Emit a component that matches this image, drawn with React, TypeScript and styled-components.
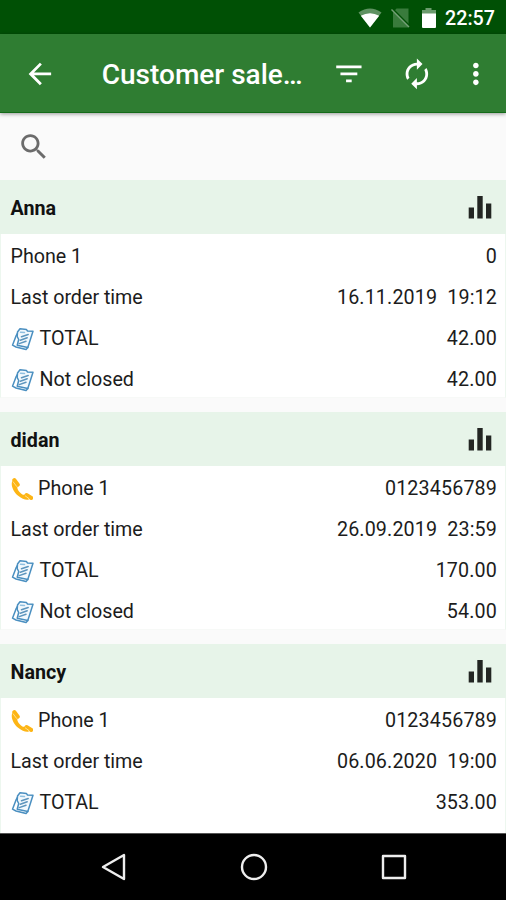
import React from 'react';
import styled, { createGlobalStyle } from 'styled-components';

const GlobalStyle = createGlobalStyle`
  * { box-sizing: border-box; }
  html, body { margin: 0; padding: 0; }
  body { font-family: Roboto, "Liberation Sans", sans-serif; background: #fafafa; overflow: hidden; }
  svg { display: block; flex: none; }
`;

const Screen = styled.div`
  width: 506px;
  height: 900px;
  display: flex;
  flex-direction: column;
  overflow: hidden;
  background: #fafafa;
`;

const StatusBar = styled.div`
  flex: none;
  height: 34px;
  padding-right: 11px;
  display: flex;
  align-items: center;
  justify-content: flex-end;
  background: #005005;
  color: #fff;
`;

const StatusIcons = styled.div`
  display: flex;
  align-items: center;
  margin-right: 7px;
  padding-top: 1px;
`;

const Clock = styled.span`
  width: 50px;
  font-size: 19.7px;
  font-weight: 500;
  line-height: 32px;
  padding-top: 4px;
  white-space: nowrap;
`;

const AppBar = styled.header`
  flex: none;
  height: 79px;
  display: flex;
  align-items: center;
  padding: 2px 13px 0 23px;
  background: #2f7d32;
  border-bottom: 1px solid #146b19;
  color: #fff;
  box-shadow: 0 1px 4px rgba(0, 0, 0, 0.4);
  z-index: 1;
`;

const Title = styled.h1`
  width: 204px;
  margin: 0 0 0 45px;
  font-size: 28px;
  font-weight: 500;
  line-height: 40px;
  padding-top: 2px;
  white-space: nowrap;
`;

const Actions = styled.div`
  display: flex;
  align-items: center;
  gap: 34px;
  margin-left: 26.3px;

  svg:last-child {
    margin-left: -8.5px;
  }
`;

const SearchBar = styled.div`
  flex: none;
  height: 67px;
  padding: 0 17px;
  display: flex;
  align-items: center;
  color: #6b6b6b;
`;

const List = styled.main`
  flex: 1;
  min-height: 0;
  overflow: hidden;
`;

const Card = styled.section`
  height: 218px;
  margin-bottom: 14px;
  background: #fff;
  border: 1px solid #edf7ef;
  border-top: 0;
  border-bottom-color: #f7f9f7;
`;

const CardHeader = styled.div`
  height: 54px;
  margin: 0 -1px;
  padding: 0 14px 0 10.5px;
  display: flex;
  align-items: center;
  justify-content: space-between;
  background: #e7f4e9;
  color: #111;
`;

const Name = styled.h2`
  margin: 0;
  padding-top: 4px;
  font-size: 19.7px;
  font-weight: 700;
  line-height: 50px;
`;

const Row = styled.div`
  height: 41px;
  padding: 4px 8px 0 9.5px;
  display: flex;
  align-items: center;
  justify-content: space-between;
  font-size: 19.7px;
  color: #1c1c1c;
  white-space: pre;
`;

const Label = styled.span`
  display: flex;
  align-items: center;
  gap: 5px;
  letter-spacing: -0.02px;
`;

const Value = styled.span`
  letter-spacing: 0.14px;
`;

const NavBar = styled.nav`
  flex: none;
  height: 67px;
  border-top: 1px solid #555;
  display: flex;
  align-items: center;
  justify-content: space-between;
  padding: 0 98px 0 99px;
  background: #000;
`;

const MaterialIcon = ({ d, size = 33.75 }: { d: string; size?: number }) => (
  <svg width={size} height={size} viewBox="0 0 24 24" fill="currentColor">
    <path d={d} />
  </svg>
);

const BACK = 'M20 11H7.83l5.59-5.59L12 4l-8 8 8 8 1.41-1.41L7.83 13H20v-2z';
const FILTER = 'M10 18h4v-2h-4v2zM3 6v2h18V6H3zm3 7h12v-2H6v2z';
const RENEW =
  'M12 6v3l4-4-4-4v3c-4.42 0-8 3.58-8 8 0 1.57.46 3.03 1.24 4.26L6.7 14.8c-.45-.83-.7-1.79-.7-2.8 0-3.31 2.69-6 6-6zm6.76 1.74L17.3 9.2c.44.84.7 1.79.7 2.8 0 3.31-2.69 6-6 6v-3l-4 4 4 4v-3c4.42 0 8-3.58 8-8 0-1.57-.46-3.03-1.24-4.26z';
const MORE =
  'M12 8c1.1 0 2-.9 2-2s-.9-2-2-2-2 .9-2 2 .9 2 2 2zm0 2c-1.1 0-2 .9-2 2s.9 2 2 2 2-.9 2-2-.9-2-2-2zm0 6c-1.1 0-2 .9-2 2s.9 2 2 2 2-.9 2-2-.9-2-2-2z';
const SEARCH =
  'M15.5 14h-.79l-.28-.27C15.41 12.59 16 11.11 16 9.5 16 5.91 13.09 3 9.5 3S3 5.91 3 9.5 5.91 16 9.5 16c1.61 0 3.09-.59 4.23-1.57l.27.28v.79l5 4.99L20.49 19l-4.99-5zm-6 0C7.01 14 5 11.99 5 9.5S7.01 5 9.5 5 14 7.01 14 9.5 11.99 14 9.5 14z';

const StatusGlyphs = () => (
  <svg width="80" height="24" viewBox="0 0 80 24">
    <path d="M0.5 6.500Q12 -1.500 23.500 6.500L12 21.500Z" fill="#5f9262" />
    <path d="M2.800 9.800Q12 4.500 21.200 9.800L12 21.500Z" fill="#fff" />
    <path d="M38.500 2.500h12v19H35V6.500Z" fill="#397b3c" />
    <path d="M34.500 3L52 20.500" stroke="#005005" strokeWidth="2" />
    <path d="M33.500 3.500L51 21" stroke="#75a077" strokeWidth="1.500" />
    <path d="M67.500 2h6v2H78v5H64V4h3.500Z" fill="#6b9b6d" />
    <path d="M64 7.500h14v13.500a1 1 0 0 1-1 1H65a1 1 0 0 1-1-1Z" fill="#fff" />
  </svg>
);

const BarsIcon = () => (
  <svg width="24" height="24" viewBox="0 0 24 24" fill="#222522">
    <path d="M0.700 12.500h5.300V23.500H0.700zM9.300 1h5.400v22.500H9.300zM18 8.500h5.300v15H18z" />
  </svg>
);

const PhoneIcon = () => (
  <svg width="22.500" height="24" viewBox="0 0 22.500 24">
    <path d="M1.500 3.500C-1 8.500 3 15.500 7.500 19C11 21.800 15 23.500 18 22.500L14 17.500C12.500 18.300 11 17.500 9 15.500C6.800 13.200 5.700 11 6.700 9.500Z" fill="#fdb515" />
    <path d="M3.300 3L6.800 7.700M15.500 18L20.300 21" stroke="#fdb515" strokeWidth="4" strokeLinecap="round" />
    <path d="M2 4.600L5.800 9.700M14 18.700L18.300 21.800" stroke="#ffe7ad" strokeWidth="0.800" />
  </svg>
);

const ReceiptIcon = () => (
  <svg width="24" height="24" viewBox="0 0 24 24" fill="none" stroke="#4a8fc0" strokeWidth="1.500" strokeLinejoin="round" strokeLinecap="round">
    <path d="M6.500 5L9 1.800L15.500 2.600L16.500 4L22 4.300L16.800 20.600L6.200 18.200L7.700 12.500L6.200 9.500Z" fill="#f3f9fd" />
    <path d="M6.300 6.500L5.200 8.600L1.500 18.200L5 20L15.100 22.400L16.800 20.600" />
    <path d="M10.500 9.800L17.200 7.500M9.300 13.200L16.200 10.700M8.200 16.600L15 14.200" stroke="#5d95bd" />
    <path d="M9.500 5.200L13.500 5.500" stroke="#8fbfe0" />
  </svg>
);

type IconKind = 'phone' | 'receipt';
type Line = { icon?: IconKind; label: string; value: string };

const customers: { name: string; lines: Line[] }[] = [
  {
    name: 'Anna',
    lines: [
      { label: 'Phone 1', value: '0' },
      { label: 'Last order time', value: '16.11.2019  19:12' },
      { icon: 'receipt', label: 'TOTAL', value: '42.00' },
      { icon: 'receipt', label: 'Not closed', value: '42.00' },
    ],
  },
  {
    name: 'didan',
    lines: [
      { icon: 'phone', label: 'Phone 1', value: '0123456789' },
      { label: 'Last order time', value: '26.09.2019  23:59' },
      { icon: 'receipt', label: 'TOTAL', value: '170.00' },
      { icon: 'receipt', label: 'Not closed', value: '54.00' },
    ],
  },
  {
    name: 'Nancy',
    lines: [
      { icon: 'phone', label: 'Phone 1', value: '0123456789' },
      { label: 'Last order time', value: '06.06.2020  19:00' },
      { icon: 'receipt', label: 'TOTAL', value: '353.00' },
    ],
  },
];

export default function App() {
  return (
    <>
      <GlobalStyle />
      <Screen>
        <StatusBar>
          <StatusIcons>
            <StatusGlyphs />
          </StatusIcons>
          <Clock>22:57</Clock>
        </StatusBar>
        <AppBar>
          <MaterialIcon d={BACK} />
          <Title>Customer sale…</Title>
          <Actions>
            <MaterialIcon d={FILTER} />
            <MaterialIcon d={RENEW} />
            <MaterialIcon d={MORE} />
          </Actions>
        </AppBar>
        <SearchBar>
          <MaterialIcon d={SEARCH} />
        </SearchBar>
        <List>
          {customers.map((c) => (
            <Card key={c.name}>
              <CardHeader>
                <Name>{c.name}</Name>
                <BarsIcon />
              </CardHeader>
              {c.lines.map((line) => (
                <Row key={line.label}>
                  <Label>
                    {line.icon === 'phone' && <PhoneIcon />}
                    {line.icon === 'receipt' && <ReceiptIcon />}
                    <span>{line.label}</span>
                  </Label>
                  <Value>{line.value}</Value>
                </Row>
              ))}
            </Card>
          ))}
        </List>
        <NavBar>
          <svg width="28" height="28" viewBox="0 0 28 28" fill="none" stroke="#eee" strokeWidth="2.400" strokeLinejoin="round">
            <path d="M25 2V26L4 14Z" />
          </svg>
          <svg width="28" height="28" viewBox="0 0 28 28" fill="none" stroke="#eee" strokeWidth="2.400">
            <circle cx="14" cy="14" r="12" />
          </svg>
          <svg width="28" height="28" viewBox="0 0 28 28" fill="none" stroke="#eee" strokeWidth="2.400" strokeLinejoin="round">
            <rect x="3" y="3" width="22" height="22" />
          </svg>
        </NavBar>
      </Screen>
    </>
  );
}
